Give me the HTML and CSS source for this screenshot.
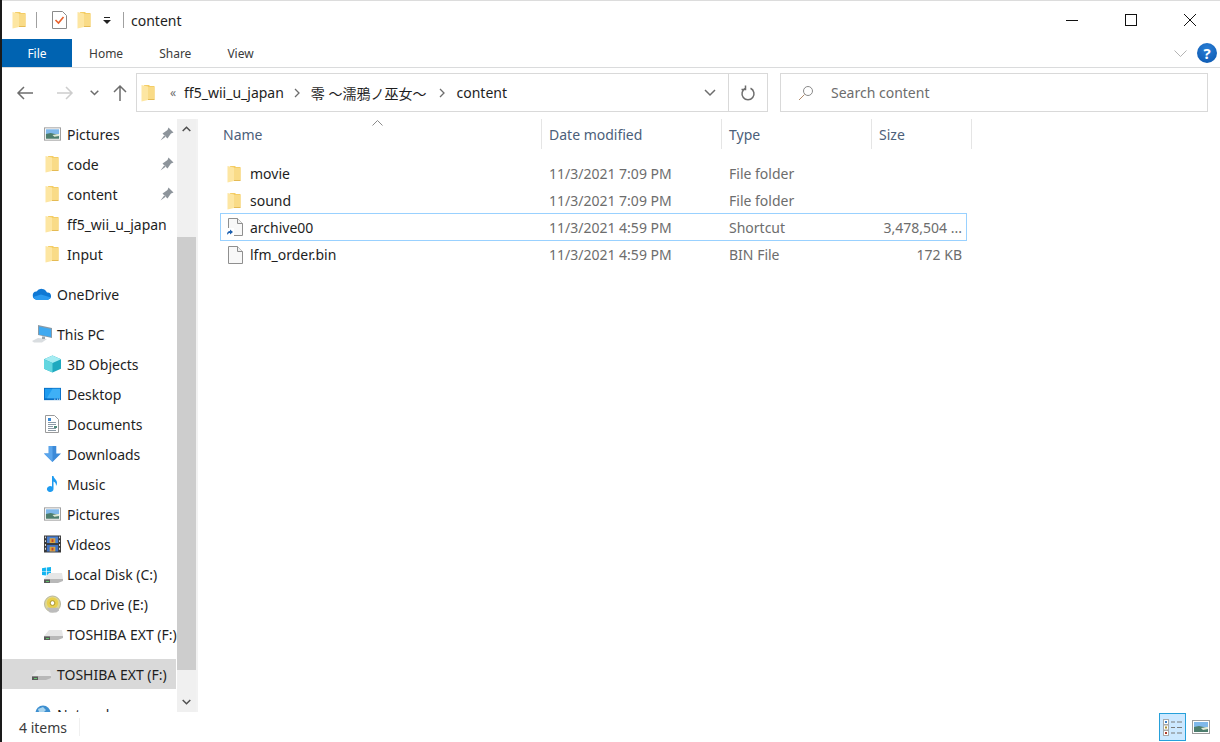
FILE: index.html
```html
<!DOCTYPE html>
<html lang="en">
<head>
    <meta charset="UTF-8">
    <title>content</title>
    <link rel="stylesheet" href="styles.css">
</head>
<body>
    <svg class="defs" width="0" height="0">
        <symbol id="folder" viewBox="0 0 14 18">
            <path d="M3 1h5l1 1h4.500v13.500H3z" fill="#f4cd66"/>
            <path d="M7 3h6.500v12H7z" fill="#f9db87"/>
            <path d="M.500 1L7 2.500V16L.500 17.500z" fill="#fde6a2"/>
            <path d="M7 15h6.500v1H7z" fill="#e5bb55"/>
        </symbol>
        <symbol id="picture" viewBox="0 0 18 14">
            <rect x=".5" y=".5" width="17" height="13" fill="#fff" stroke="#9c9c9c"/>
            <rect x="2" y="2" width="14" height="5" fill="#7fb8ea"/>
            <path d="M2 7l5-1 9 2v4H2z" fill="#4d7d6d"/>
            <path d="M9 8l7-1v2l-5 1z" fill="#dfe9d6"/>
        </symbol>
        <symbol id="pin" viewBox="0 0 14 14">
            <path d="M8.500.500l5 5-2.500 1-2.500 3.500-1 1.500-5-5 1.500-1 3.500-2.500zM4.500 8L.500 13.500l5.500-4z" fill="#8d949b"/>
        </symbol>
        <symbol id="file" viewBox="0 0 15 18">
            <path d="M.500.500h9l5 5v12H.5z" fill="#f8f8f8" stroke="#8f8f8f"/>
            <path d="M9.500.500v5h5" fill="#efefef" stroke="#8f8f8f"/>
        </symbol>
        <symbol id="disk" viewBox="0 0 19 11">
            <path d="M0 7l5-6h13l1 6z" fill="#e6e6e6"/>
            <path d="M0 7h19v2l-5 2H0z" fill="#b8b8b8"/>
            <path d="M0 7.500h6V11H0z" fill="#5a5a5a"/>
            <rect x="2" y="9" width="3" height="1" fill="#5fc46a"/>
        </symbol>
    </svg>

    <div class="window">
        <div class="titlebar">
            <svg class="ic-folder title-first"><use href="#folder"/></svg>
            <span class="title-sep"></span>
            <svg class="ic-check" viewBox="0 0 15 18">
                <path d="M.500.500h10l4 4v13H.5z" fill="#fff" stroke="#8a8a8a"/>
                <path d="M3.500 9l3 3 5-6" fill="none" stroke="#e8612c" stroke-width="1.600"/>
            </svg>
            <svg class="ic-folder"><use href="#folder"/></svg>
            <svg class="ic-drop" viewBox="0 0 8 7">
                <path d="M1 0h6v1H1zM0 3h8L4 7z" fill="#222"/>
            </svg>
            <span class="title-sep last"></span>
            <span class="title-text">content</span>
            <div class="win-controls">
                <svg viewBox="0 0 12 12"><path d="M0 6.500h12" stroke="#111"/></svg>
                <svg viewBox="0 0 12 12"><rect x=".5" y=".5" width="11" height="11" fill="none" stroke="#111"/></svg>
                <svg viewBox="0 0 12 12"><path d="M0 0l12 12M12 0L0 12" stroke="#111"/></svg>
            </div>
        </div>

        <div class="ribbon">
            <div class="tab-file">File</div>
            <div class="tab home">Home</div>
            <div class="tab share">Share</div>
            <div class="tab view">View</div>
            <svg class="ribbon-chevron" viewBox="0 0 13 7"><path d="M.500.500l6 6 6-6" fill="none" stroke="#b4b4b4"/></svg>
            <div class="help">?</div>
        </div>

        <div class="addressbar">
            <svg class="nav-back" viewBox="0 0 16 14"><path d="M7 1L1 7l6 6M1 7h15" fill="none" stroke="#6d6d6d" stroke-width="1.500"/></svg>
            <svg class="nav-forward" viewBox="0 0 16 14"><path d="M9 1l6 6-6 6M15 7H0" fill="none" stroke="#cdcdcd" stroke-width="1.500"/></svg>
            <svg class="nav-recent" viewBox="0 0 9 6"><path d="M.700.700L4.500 4.500 8.300.700" fill="none" stroke="#6d6d6d" stroke-width="1.500"/></svg>
            <svg class="nav-up" viewBox="0 0 14 16"><path d="M1 7l6-6 6 6M7 1v15" fill="none" stroke="#6d6d6d" stroke-width="1.500"/></svg>
            <div class="path-box">
                <svg class="ic-folder path-folder"><use href="#folder"/></svg>
                <span class="path-more">«</span>
                <span class="crumb">ff5_wii_u_japan</span>
                <svg class="crumb-sep" viewBox="0 0 6 10"><path d="M1 1l4 4-4 4" fill="none" stroke="#6d6d6d" stroke-width="1.300"/></svg>
                <span class="crumb">零 ～濡鴉ノ巫女～</span>
                <svg class="crumb-sep wide" viewBox="0 0 6 10"><path d="M1 1l4 4-4 4" fill="none" stroke="#6d6d6d" stroke-width="1.300"/></svg>
                <span class="crumb">content</span>
                <svg class="path-drop" viewBox="0 0 12 7"><path d="M1 1l5 5 5-5" fill="none" stroke="#6d6d6d" stroke-width="1.500"/></svg>
                <div class="path-refresh">
                    <svg viewBox="0 0 14 15"><path d="M4.500 3.300a6 6 0 1 0 5 0M4.500 .5v4h-4" fill="none" stroke="#6d6d6d" stroke-width="1.500"/></svg>
                </div>
            </div>
            <div class="search-box">
                <svg viewBox="0 0 16 16"><circle cx="10" cy="6" r="4.500" fill="none" stroke="#8a8a8a"/><path d="M6.500 9.500L1 15" stroke="#b08a6a"/></svg>
                <span>Search content</span>
            </div>
        </div>

        <div class="main">
            <div class="nav-pane">
                <div class="nav-list">
                    <div class="nav-row sub"><svg class="ni-wide"><use href="#picture"/></svg>Pictures<svg class="pin"><use href="#pin"/></svg></div>
                    <div class="nav-row sub"><svg class="ni-folder"><use href="#folder"/></svg>code<svg class="pin"><use href="#pin"/></svg></div>
                    <div class="nav-row sub"><svg class="ni-folder"><use href="#folder"/></svg>content<svg class="pin"><use href="#pin"/></svg></div>
                    <div class="nav-row sub"><svg class="ni-folder"><use href="#folder"/></svg>ff5_wii_u_japan</div>
                    <div class="nav-row sub group-end"><svg class="ni-folder"><use href="#folder"/></svg>Input</div>

                    <div class="nav-row top group-end">
                        <svg class="ni-wide" viewBox="0 0 20 13">
                            <path d="M5 12a4 4 0 0 1-.5-8A6 6 0 0 1 15 5a3.500 3.500 0 0 1 1 7z" fill="#0f78d4"/>
                            <path d="M1 9.500L9 7l10 3-3 2.500H4z" fill="#2b9af0"/>
                        </svg>OneDrive
                    </div>

                    <div class="nav-row top">
                        <svg class="ni-wide" viewBox="0 0 20 18">
                            <path d="M6 0l14 3v10L6 10z" fill="#8a9aa6"/>
                            <path d="M7 1.500l12 2.500v8L7 9.500z" fill="#3fa9f0"/>
                            <path d="M0 16l6-3 9 1-5 3.500H2z" fill="#d9dde0"/>
                            <path d="M10 11.500h3v2.500h-3z" fill="#9aa5ad"/>
                        </svg>This PC
                    </div>
                    <div class="nav-row sub">
                        <svg class="ni-wide" viewBox="0 0 18 18">
                            <path d="M9 0l9 4v10l-9 4-9-4V4z" fill="#1fa9bf"/>
                            <path d="M9 0l9 4-9 4-9-4z" fill="#a5ecf2"/>
                            <path d="M0 4l9 4v10l-9-4z" fill="#62d6e0"/>
                        </svg>3D Objects
                    </div>
                    <div class="nav-row sub">
                        <svg class="ni-wide" viewBox="0 0 18 13">
                            <rect width="18" height="13" fill="#0b6fc4"/>
                            <rect x="1" y="1" width="16" height="10" fill="#1e9cf0"/>
                            <path d="M3 11l6-10h8v10z" fill="#3fb0f6"/>
                            <path d="M11 12h1M14 12h1M16 12h1" stroke="#fff"/>
                        </svg>Desktop
                    </div>
                    <div class="nav-row sub">
                        <svg class="ni-folder" viewBox="0 0 14 18">
                            <path d="M.500.500h9l4 4v13H.5z" fill="#fff" stroke="#9a9a9a"/>
                            <path d="M3 7.500h8M3 9.500h8M3 11.500h5M3 13.500h8M3 15.500h8" stroke="#8c9aa6"/>
                            <path d="M3 3h3v3H3z" fill="#3a8ad6"/>
                            <path d="M9 11h3v2H9z" fill="#4f8a7a"/>
                        </svg>Documents
                    </div>
                    <div class="nav-row sub">
                        <svg class="ni-wide" viewBox="0 0 18 17">
                            <path d="M5 0h8v8h5l-9 9-9-9h5z" fill="#3c8ad8"/>
                            <path d="M5 0h4v17l-9-9h5z" fill="#5aa5ec"/>
                        </svg>Downloads
                    </div>
                    <div class="nav-row sub">
                        <svg class="ni-folder" viewBox="0 0 14 18">
                            <path d="M7 1h1.500c.3 3 3.500 3.500 3.500 7 0 1-.3 2-1 3 .3-3-1.500-4-2.500-4.500V14a3.300 3 0 1 1-1.500-2.400z" fill="#1e9bf0"/>
                        </svg>Music
                    </div>
                    <div class="nav-row sub"><svg class="ni-wide"><use href="#picture"/></svg>Pictures</div>
                    <div class="nav-row sub">
                        <svg class="ni-wide" viewBox="0 0 18 18">
                            <rect width="18" height="18" fill="#3a3a3a"/>
                            <path d="M1 1h1v2H1zM1 5h1v2H1zM1 9h1v2H1zM1 13h1v2H1zM16 1h1v2h-1zM16 5h1v2h-1zM16 9h1v2h-1zM16 13h1v2h-1z" fill="#eee"/>
                            <rect x="3" y="1" width="12" height="7" fill="#4a7fd0"/>
                            <rect x="3" y="10" width="12" height="7" fill="#3f72c4"/>
                            <path d="M6 3h6v5H6zM6 12h6v5H6z" fill="#d9a441"/>
                            <path d="M8 4h2v3H8zM8 13h2v3H8z" fill="#c2452d"/>
                        </svg>Videos
                    </div>
                    <div class="nav-row sub">
                        <span class="ni-stack">
                            <svg class="ni-win" viewBox="0 0 8 8"><path d="M0 1l3.500-.5V3.700H0zM4.200.400L8 0v3.700H4.200zM0 4.300h3.500v3.200L0 7zM4.200 4.300H8V8l-3.800-.5z" fill="#12b4f0"/></svg>
                            <svg class="ni-disk"><use href="#disk"/></svg>
                        </span>Local Disk (C:)
                    </div>
                    <div class="nav-row sub">
                        <svg class="ni-wide" viewBox="0 0 18 18">
                            <circle cx="9" cy="9" r="8.500" fill="#e0d890" stroke="#b5b5a0"/>
                            <circle cx="9" cy="8" r="6" fill="#e8cf4d"/>
                            <circle cx="9" cy="8" r="2.500" fill="#fff" stroke="#a58f22"/>
                            <path d="M3 13h12l1 3-3 2H6z" fill="#bcbcbc"/>
                        </svg>CD Drive (E:)
                    </div>
                    <div class="nav-row sub group-end">
                        <svg class="ni-disk-only"><use href="#disk"/></svg>TOSHIBA EXT (F:)
                    </div>
                    <div class="nav-row top selected group-end">
                        <svg class="ni-disk-only"><use href="#disk"/></svg>TOSHIBA EXT (F:)
                    </div>
                    <div class="nav-row top">
                        <svg class="ni-wide" viewBox="0 0 18 18">
                            <circle cx="10" cy="8" r="7.500" fill="#3d8fd0"/>
                            <path d="M5 4l5-2 3 3-3 3-4-1zM10 10l5-2v4l-4 2z" fill="#a9d4ee"/>
                            <path d="M1 13h9v4H1z" fill="#8ea2b2"/>
                        </svg>Network
                    </div>
                </div>
                <div class="scrollbar">
                    <svg class="sb-arrow" viewBox="0 0 9 6"><path d="M.700 5L4.500 1.200 8.300 5" fill="none" stroke="#505050" stroke-width="1.500"/></svg>
                    <div class="sb-thumb"></div>
                    <svg class="sb-arrow" viewBox="0 0 9 6"><path d="M.700 1L4.500 4.800 8.300 1" fill="none" stroke="#505050" stroke-width="1.500"/></svg>
                </div>
            </div>

            <div class="files">
                <div class="file-head">
                    <svg class="sort-arrow" viewBox="0 0 11 6"><path d="M.500 5.500l5-5 5 5" fill="none" stroke="#8a8a8a"/></svg>
                    <div class="col-head col-name">Name</div>
                    <div class="col-head col-date">Date modified</div>
                    <div class="col-head col-type">Type</div>
                    <div class="col-head col-size">Size</div>
                </div>
                <div class="file-list">
                    <div class="file-row">
                        <div class="cell-name"><svg class="ni-folder"><use href="#folder"/></svg>movie</div>
                        <div class="cell-dim">11/3/2021 7:09 PM</div>
                        <div class="cell-dim">File folder</div>
                        <div class="cell-size"></div>
                    </div>
                    <div class="file-row">
                        <div class="cell-name"><svg class="ni-folder"><use href="#folder"/></svg>sound</div>
                        <div class="cell-dim">11/3/2021 7:09 PM</div>
                        <div class="cell-dim">File folder</div>
                        <div class="cell-size"></div>
                    </div>
                    <div class="file-row focused">
                        <div class="cell-name">
                            <span class="file-ic">
                                <svg class="ni-file"><use href="#file"/></svg>
                                <svg class="ni-shortcut" viewBox="0 0 8 8"><rect width="8" height="8" fill="#fff"/><path d="M1 7c0-3 1-4 3-4V1.500L7 4 4 6.500V5C3 5 2 5.500 1 7z" fill="#1c5fae"/></svg>
                            </span>archive00
                        </div>
                        <div class="cell-dim">11/3/2021 4:59 PM</div>
                        <div class="cell-dim">Shortcut</div>
                        <div class="cell-size">3,478,504 ...</div>
                    </div>
                    <div class="file-row">
                        <div class="cell-name"><span class="file-ic"><svg class="ni-file"><use href="#file"/></svg></span>lfm_order.bin</div>
                        <div class="cell-dim">11/3/2021 4:59 PM</div>
                        <div class="cell-dim">BIN File</div>
                        <div class="cell-size">172 KB</div>
                    </div>
                </div>
            </div>
        </div>

        <div class="statusbar">
            <span class="status-text">4 items</span>
            <span class="status-sep"></span>
            <div class="view-btn active">
                <svg viewBox="0 0 19 17">
                    <path d="M0 0h6v17H0z" fill="#a8a8a8"/>
                    <path d="M1 1h4v4H1zM1 6.500h4v4H1zM1 12h4v4H1z" fill="#fff"/>
                    <path d="M2 2h2v2H2z" fill="#3a7fc8"/>
                    <path d="M2 7.500h2v2H2z" fill="#a89230"/>
                    <path d="M2 13h2v2H2z" fill="#b03a2a"/>
                    <path d="M8 3h4M14 3h5M8 8.500h4M14 8.500h5M8 14h4M14 14h5" stroke="#7a7a7a" stroke-width="1.200"/>
                </svg>
            </div>
            <div class="view-btn">
                <svg class="view-large"><use href="#picture"/></svg>
            </div>
        </div>
    </div>
</body>
</html>
```

FILE: styles.css
```css
html, body {
    margin: 0;
    height: 100%;
    overflow: hidden;
}
body {
    background: #1a1a1a;
    font-family: "Noto Sans", "Noto Sans CJK JP", sans-serif;
    font-size: 14px;
    color: #1e1e1e;
}
.defs {
    position: absolute;
}
svg {
    display: block;
    flex: none;
    overflow: visible;
}
.window {
    margin-left: 2px;
    height: 742px;
    background: #fff;
    display: flex;
    flex-direction: column;
    box-sizing: border-box;
    border-top: 1px solid #dcdcdc;
}

/* title bar */
.titlebar {
    height: 38px;
    display: flex;
    align-items: center;
    flex: none;
}
.ic-folder {
    width: 14px;
    height: 18px;
}
.title-first {
    margin-left: 10px;
}
.title-sep {
    width: 1px;
    height: 16px;
    background: #a0a0a0;
    margin-left: 10px;
}
.title-sep.last {
    margin-left: 12px;
}
.ic-check {
    width: 15px;
    height: 18px;
    margin-left: 15px;
}
.titlebar .ic-folder:not(.title-first) {
    margin-left: 10px;
}
.ic-drop {
    width: 8px;
    height: 7px;
    margin-left: 12px;
}
.title-text {
    margin-left: 7px;
}
.win-controls {
    margin-left: auto;
    display: flex;
    gap: 47px;
    margin-right: 24px;
}
.win-controls svg {
    width: 12px;
    height: 12px;
}

/* ribbon tabs */
.ribbon {
    height: 28px;
    flex: none;
    display: flex;
    align-items: center;
    border-bottom: 1px solid #dadbdc;
    font-size: 12px;
    color: #3b3b3b;
}
.tab-file {
    width: 70px;
    height: 100%;
    background: #0063b1;
    color: #fff;
    display: flex;
    align-items: center;
    justify-content: center;
}
.tab.home {
    margin-left: 17px;
}
.tab.share {
    margin-left: 36px;
}
.tab.view {
    margin-left: 36px;
}
.ribbon-chevron {
    width: 13px;
    height: 7px;
    margin-left: auto;
}
.help {
    width: 20px;
    height: 20px;
    margin: 0 3px 0 10px;
    border-radius: 50%;
    background: radial-gradient(circle at 50% 30%, #2a7fd6, #0a55ad);
    color: #fff;
    font-weight: 700;
    font-size: 15px;
    line-height: 20px;
    text-align: center;
}

/* address bar */
.addressbar {
    height: 50px;
    flex: none;
    display: flex;
    align-items: center;
    padding-bottom: 1px;
    box-sizing: border-box;
}
.nav-back {
    width: 16px;
    height: 14px;
    margin-left: 15px;
}
.nav-forward {
    width: 16px;
    height: 14px;
    margin-left: 24px;
}
.nav-recent {
    width: 9px;
    height: 6px;
    margin-left: 17px;
}
.nav-up {
    width: 14px;
    height: 16px;
    margin-left: 14px;
}
.path-box {
    width: 632px;
    height: 39px;
    margin-left: 9px;
    box-sizing: border-box;
    border: 1px solid #d9d9d9;
    display: flex;
    align-items: center;
}
.path-folder {
    margin-left: 4px;
}
.path-more {
    margin: 0 8px 0 15px;
    color: #6d6d6d;
    font-size: 12px;
}
.crumb-sep {
    width: 6px;
    height: 10px;
    margin: 0 11px 0 10px;
}
.crumb-sep.wide {
    margin: 0 12px;
}
.path-drop {
    width: 12px;
    height: 7px;
    margin-left: auto;
    margin-right: 12px;
}
.path-refresh {
    width: 39px;
    height: 100%;
    border-left: 1px solid #d9d9d9;
    display: flex;
    align-items: center;
    justify-content: center;
    box-sizing: border-box;
}
.path-refresh svg {
    width: 14px;
    height: 15px;
}
.search-box {
    width: 428px;
    height: 39px;
    margin-left: 12px;
    box-sizing: border-box;
    border: 1px solid #d9d9d9;
    display: flex;
    align-items: center;
    color: #6d6d6d;
}
.search-box svg {
    width: 16px;
    height: 16px;
    margin: 0 17px 0 17px;
}

/* main area */
.main {
    height: 594px;
    flex: none;
    display: flex;
    padding-top: 1px;
    box-sizing: border-box;
}
.nav-pane {
    width: 194px;
    flex: none;
    display: flex;
    border-right: 2px solid #f2f2f2;
}
.nav-list {
    width: 175px;
    flex: none;
    overflow: hidden;
}
.nav-row {
    height: 30px;
    display: flex;
    align-items: center;
    white-space: nowrap;
    position: relative;
}
.nav-row.sub {
    padding-left: 42px;
}
.nav-row.top {
    padding-left: 30px;
}
.nav-row.group-end {
    margin-bottom: 10px;
}
.nav-row.selected {
    background: #d9d9d9;
    width: 174px;
    box-sizing: border-box;
}
.ni-wide {
    width: 17px;
    height: 18px;
    margin-right: 6px;
}
.nav-row.top .ni-wide {
    width: 20px;
    margin-right: 5px;
}
.ni-folder {
    width: 14px;
    height: 18px;
    margin-left: 1px;
    margin-right: 8px;
}
.ni-stack {
    width: 19px;
    height: 18px;
    margin-right: 4px;
    display: block;
    position: relative;
}
.ni-win {
    position: absolute;
    left: -2px;
    top: 2px;
    width: 9px;
    height: 9px;
}
.ni-disk {
    position: absolute;
    left: 0;
    top: 7px;
    width: 19px;
    height: 11px;
}
.ni-disk-only {
    width: 19px;
    height: 11px;
    margin-right: 6px;
}
.nav-row.sub .ni-disk-only {
    margin-right: 4px;
}
.pin {
    position: absolute;
    left: 158px;
    top: 8px;
    width: 14px;
    height: 14px;
}

/* scrollbar */
.scrollbar {
    width: 19px;
    flex: none;
    background: #f0f0f0;
    display: flex;
    flex-direction: column;
    align-items: center;
}
.sb-arrow {
    width: 9px;
    height: 6px;
    margin: 7px 0;
}
.sb-thumb {
    width: 100%;
    height: 433px;
    margin-top: 98px;
    margin-bottom: auto;
    background: #cdcdcd;
}

/* file list */
.files {
    flex: 1;
    min-width: 0;
    padding-left: 23px;
}
.file-head {
    display: flex;
    height: 30px;
    position: relative;
    color: #4c607a;
}
.sort-arrow {
    position: absolute;
    left: 151px;
    top: 1px;
    width: 11px;
    height: 6px;
}
.col-head {
    box-sizing: border-box;
    border-right: 1px solid #e5e5e5;
    display: flex;
    align-items: center;
    padding-left: 7px;
}
.col-name {
    width: 321px;
    padding-left: 2px;
}
.col-date {
    width: 180px;
}
.col-type {
    width: 150px;
}
.col-size {
    width: 100px;
}
.file-list {
    margin-top: 11px;
    margin-left: -1px;
    width: 747px;
}
.file-row {
    height: 27px;
    display: grid;
    grid-template-columns: 321px 180px 150px 90px;
    align-items: center;
    box-sizing: border-box;
    border: 1px solid transparent;
}
.file-row.focused {
    border-color: #99d1ff;
    height: 28px;
    margin-top: -1px;
}
.cell-name {
    display: flex;
    align-items: center;
    padding-left: 6px;
}
.cell-name .ni-folder {
    margin-left: 0;
    margin-right: 9px;
}
.file-ic {
    width: 15px;
    height: 18px;
    display: block;
    position: relative;
    margin-left: 1px;
    margin-right: 7px;
}
.ni-file {
    width: 15px;
    height: 18px;
}
.ni-shortcut {
    position: absolute;
    left: -2px;
    bottom: 0;
    width: 8px;
    height: 8px;
}
.cell-dim {
    color: #6d6d6d;
    padding-left: 7px;
}
.cell-size {
    color: #6d6d6d;
    text-align: right;
    white-space: nowrap;
}

/* status bar */
.statusbar {
    flex: 1;
    display: flex;
    align-items: center;
    color: #3b3b3b;
}
.status-text {
    margin-left: 17px;
}
.status-sep {
    width: 1px;
    height: 18px;
    background: #f0f0f0;
    margin-left: 12px;
    margin-right: auto;
}
.view-btn {
    width: 27px;
    height: 28px;
    box-sizing: border-box;
    display: flex;
    align-items: center;
    justify-content: center;
    margin-right: 1px;
}
.view-btn:last-child {
    margin-right: 6px;
}
.view-btn.active {
    background: #cce8ff;
    border: 1px solid #26a0da;
}
.view-btn svg {
    width: 19px;
    height: 17px;
}
.view-btn svg.view-large {
    width: 18px;
    height: 14px;
}
```
